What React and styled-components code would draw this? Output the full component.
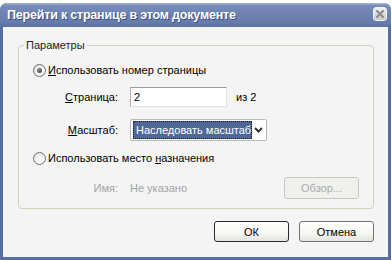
import React from "react";
import styled, { createGlobalStyle } from "styled-components";

const Global = createGlobalStyle`
  html, body { margin: 0; padding: 0; background: #ffffff; }
  body { font-family: "Liberation Sans", Arial, sans-serif; font-size: 11px; color: #000; }
  * { box-sizing: border-box; }
`;

const Window = styled.div`
  margin-top: 3px;
  width: 391px;
  height: 257px;
  display: flex;
  flex-direction: column;
  background: #5a6e9e;
  border-radius: 7px 7px 0 0;
  overflow: hidden;
`;

const TitleBar = styled.div`
  height: 24px;
  flex: none;
  display: flex;
  align-items: flex-start;
  padding: 0 4px 0 7px;
  background: linear-gradient(
    to bottom,
    #b7c5df 0px,
    #8fa2c9 1px,
    #768bb8 3px,
    #6d82b0 12px,
    #667ba9 20px,
    #5b6f9d 24px
  );
`;

const Title = styled.div`
  flex: 1;
  margin-top: 5px;
  color: #ffffff;
  font: bold 12.5px "Liberation Sans", Arial, sans-serif;
  line-height: 15px;
  text-shadow: 1px 1px 0 #3f4f74;
  white-space: nowrap;
  letter-spacing: -0.2px;
`;

const CloseButton = styled.div`
  margin-top: 4px;
  width: 14px;
  height: 14px;
  border: 1px solid #f4f4f4;
  border-radius: 3px;
  background: linear-gradient(to bottom, #eeeeee, #cacaca);
  display: flex;
  align-items: center;
  justify-content: center;
`;

const Body = styled.div`
  flex: 1;
  margin: 0 3px 3px 3px;
  background: #f4f4f4;
  padding: 18px 14px 0 15px;
  display: flex;
  flex-direction: column;
`;

const GroupBox = styled.div`
  width: 356px;
  border: 1px solid #d0d0bf;
  border-radius: 4px;
  padding-bottom: 9px;
  display: flex;
  flex-direction: column;
`;

const Legend = styled.div`
  align-self: flex-start;
  margin: -7px 0 0 5px;
  padding: 0 2px;
  line-height: 13px;
  height: 13px;
  background: #f4f4f4;
  color: #222;
`;

const RadioRow = styled.div`
  height: 16px;
  margin-top: ${(p) => p.$top}px;
  padding-left: 14px;
  display: flex;
  align-items: center;
  gap: 2px;
`;

const Radio = styled.span`
  width: 13px;
  height: 13px;
  border-radius: 50%;
  border: 1px solid #6f6f6f;
  background: radial-gradient(circle at 65% 65%, #ffffff 0%, #f2f2f0 45%, #d6d5cf 100%);
  display: flex;
  align-items: center;
  justify-content: center;
  flex: none;
  &::after {
    content: "";
    display: ${(p) => (p.$checked ? "block" : "none")};
    width: 5px;
    height: 5px;
    border-radius: 50%;
    background: radial-gradient(circle at 35% 35%, #8a8a8a, #3a3a3a);
  }
`;

const U = styled.span`
  text-decoration: underline;
  text-underline-offset: 1px;
`;

const FieldRow = styled.div`
  height: ${(p) => p.$h}px;
  margin-top: ${(p) => p.$top}px;
  display: flex;
  align-items: center;
  padding-right: 14px;
`;

const Label = styled.span`
  width: 99px;
  margin-right: 12px;
  text-align: right;
  color: ${(p) => (p.$disabled ? "#a3a3a3" : "#000")};
  flex: none;
`;

const Muted = styled.span`
  color: #a3a3a3;
`;

const TextInput = styled.div`
  width: 97px;
  height: 20px;
  background: #ffffff;
  border: 1px solid #e2e2e2;
  border-top-color: #9c9c9c;
  border-left-color: #b0b0b0;
  padding: 1px 3px;
  line-height: 16px;
`;

const Suffix = styled.span`
  margin-left: 9px;
`;

const Select = styled.div`
  width: 137px;
  height: 22px;
  background: #ffffff;
  border: 1px solid #b9b9b9;
  border-radius: 2px;
  display: flex;
  align-items: center;
  padding: 1px 1px 1px 2px;
`;

const SelectValue = styled.div`
  width: 119px;
  height: 18px;
  background: #4f6897;
  color: #ffffff;
  border: 1px dotted #1b1b1b;
  padding-left: 2px;
  line-height: 16px;
  white-space: nowrap;
  overflow: hidden;
`;

const SelectArrow = styled.div`
  flex: 1;
  display: flex;
  align-items: center;
  justify-content: center;
`;

const Button = styled.div`
  width: 75px;
  height: ${(p) => (p.$h ? p.$h : 21)}px;
  border: 1px solid ${(p) => (p.$disabled ? "#c7c7c2" : p.$default ? "#2b2b2b" : "#727272")};
  border-radius: 3px;
  background: ${(p) =>
    p.$disabled
      ? "#f0f0ee"
      : "linear-gradient(to bottom, #ffffff 0%, #f6f6f3 60%, #e4e3dd 100%)"};
  color: ${(p) => (p.$disabled ? "#ababab" : "#000")};
  display: flex;
  align-items: center;
  justify-content: center;
  flex: none;
`;

const BrowseButton = styled(Button)`
  margin-left: auto;
`;

const ButtonRow = styled.div`
  width: 356px;
  margin-top: 12px;
  display: flex;
  justify-content: flex-end;
  gap: 10px;
`;

export default function App() {
  return (
    <>
      <Global />
      <Window>
        <TitleBar>
          <Title>Перейти к странице в этом документе</Title>
          <CloseButton>
            <svg width="8" height="8" viewBox="0 0 8 8">
              <path d="M1 1 L7 7 M7 1 L1 7" stroke="#8c8c8c" strokeWidth="2" strokeLinecap="square" />
            </svg>
          </CloseButton>
        </TitleBar>
        <Body>
          <GroupBox>
            <Legend>Параметры</Legend>
            <RadioRow $top={10}>
              <Radio $checked />
              <span>
                <U>И</U>спользовать номер страницы
              </span>
            </RadioRow>
            <FieldRow $top={9} $h={20}>
              <Label>
                <U>С</U>траница:
              </Label>
              <TextInput>2</TextInput>
              <Suffix>из 2</Suffix>
            </FieldRow>
            <FieldRow $top={12} $h={22}>
              <Label>
                <U>М</U>асштаб:
              </Label>
              <Select>
                <SelectValue>Наследовать масштаб</SelectValue>
                <SelectArrow>
                  <svg width="9" height="6" viewBox="0 0 9 6">
                    <path d="M1 1 L4.5 4.5 L8 1" fill="none" stroke="#333" strokeWidth="2" />
                  </svg>
                </SelectArrow>
              </Select>
            </FieldRow>
            <RadioRow $top={9}>
              <Radio />
              <span>
                Использовать место <U>н</U>азначения
              </span>
            </RadioRow>
            <FieldRow $top={11} $h={22}>
              <Label $disabled>Имя:</Label>
              <Muted>Не указано</Muted>
              <BrowseButton $disabled $h={22}>
                Обзор...
              </BrowseButton>
            </FieldRow>
          </GroupBox>
          <ButtonRow>
            <Button $default>ОК</Button>
            <Button>Отмена</Button>
          </ButtonRow>
        </Body>
      </Window>
    </>
  );
}
